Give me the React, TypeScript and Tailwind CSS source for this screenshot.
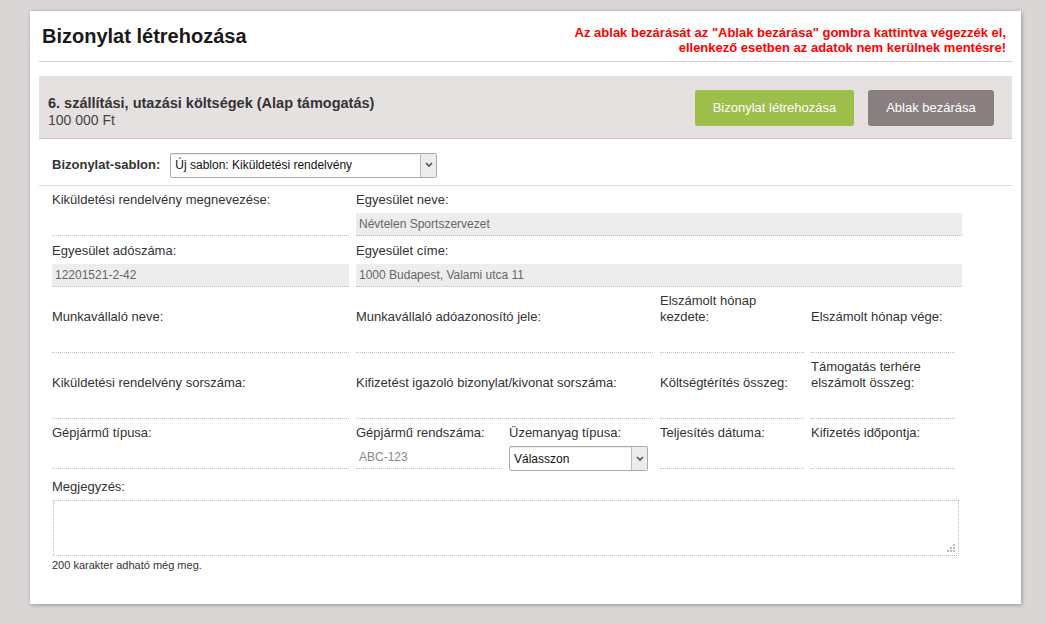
import React from "react";

const font = { fontFamily: '"Liberation Sans", Arial, sans-serif' };

function Chevron() {
  return (
    <svg width="8" height="6" viewBox="0 0 8 6">
      <polyline points="1,1 4,4 7,1" fill="none" stroke="#555" strokeWidth="1.6" />
    </svg>
  );
}

function FakeSelect({ text, className }: { text: string; className: string }) {
  return (
    <div
      className={`flex items-stretch border border-[#aaa] rounded-[2px] bg-white shadow-[inset_0_1px_1px_rgba(0,0,0,0.08)] ${className}`}
    >
      <div className="flex-1 flex items-center pl-[4px] text-[12px] text-[#111]">{text}</div>
      <div className="w-[16px] flex items-center justify-center bg-[#ececec] border-l border-[#bbb]">
        <Chevron />
      </div>
    </div>
  );
}

function Field({
  label,
  value,
  placeholder,
  gray,
  className = "",
}: {
  label: React.ReactNode;
  value?: string;
  placeholder?: string;
  gray?: boolean;
  className?: string;
}) {
  return (
    <div className={`flex flex-col justify-end ${className}`}>
      <div className="text-[13px] leading-[16px] text-[#333]">{label}</div>
      <div
        className={`mt-[5px] h-[23px] flex items-center pl-[3px] border-b border-dotted border-[#bdbdbd] text-[12px] ${
          gray ? "bg-[#ededed] text-[#666]" : "text-[#888]"
        }`}
      >
        {value ?? placeholder ?? ""}
      </div>
    </div>
  );
}

export default function App() {
  return (
    <div className="min-h-screen bg-[#dad6d6] pt-[11px] pl-[30px]" style={font}>
      <div className="w-[991px] h-[593px] bg-white shadow-[1px_1px_4px_rgba(0,0,0,0.3)] px-[9px]">
        {/* header */}
        <div className="h-[51px] flex items-end justify-between border-b border-[#cfcfcf] pb-[6px]">
          <h1 className="text-[20px] font-bold text-[#1a1a1a] pl-[3px] leading-[24px] mb-[7px]">
            Bizonylat létrehozása
          </h1>
          <div className="text-right text-[13px] font-bold text-[#f00] leading-[15px] pr-[6px]">
            <div>Az ablak bezárását az "Ablak bezárása" gombra kattintva végezzék el,</div>
            <div>ellenkező esetben az adatok nem kerülnek mentésre!</div>
          </div>
        </div>

        {/* band */}
        <div className="mt-[14px] h-[63px] bg-[#e5e1e0] border-b border-[#c9c5c5] flex items-center justify-between pl-[9px] pr-[18px]">
          <div className="text-[#333] pt-[10px]">
            <div className="text-[14.5px] font-bold leading-[17px]">
              6. szállítási, utazási költségek (Alap támogatás)
            </div>
            <div className="text-[14px] leading-[17px] text-[#444]">100 000 Ft</div>
          </div>
          <div className="flex gap-[14px] items-center pt-[1px]">
            <button className="h-[36px] w-[159px] rounded-[3px] bg-[#9dbe49] text-white text-[13px]">
              Bizonylat létrehozása
            </button>
            <button className="h-[36px] w-[126px] rounded-[3px] bg-[#8a7f80] text-white text-[13px]">
              Ablak bezárása
            </button>
          </div>
        </div>

        {/* template */}
        <div className="h-[47px] flex items-center gap-[10px] pl-[13px] pt-[6px] border-b border-[#dcdcdc]">
          <span className="text-[13px] font-bold text-[#333]">Bizonylat-sablon:</span>
          <FakeSelect text="Új sablon: Kiküldetési rendelvény" className="w-[267px] h-[25px]" />
        </div>

        {/* fields */}
        <div className="pl-[13px]">
          <div className="grid grid-cols-[297px_146px_144px_144px_144px] gap-x-[7px] h-[51px] pb-[1px]">
            <Field label="Kiküldetési rendelvény megnevezése:" />
            <Field label="Egyesület neve:" value="Névtelen Sportszervezet" gray className="col-span-4 w-[606px]" />
          </div>
          <div className="grid grid-cols-[297px_146px_144px_144px_144px] gap-x-[7px] h-[51px] pb-[1px]">
            <Field label="Egyesület adószáma:" value="12201521-2-42" gray />
            <Field label="Egyesület címe:" value="1000 Budapest, Valami utca 11" gray className="col-span-4 w-[606px]" />
          </div>
          <div className="grid grid-cols-[297px_297px_144px_144px] gap-x-[7px] h-[65px]">
            <Field label="Munkavállaló neve:" />
            <Field label="Munkavállaló adóazonosító jele:" />
            <Field label={<>Elszámolt hónap<br />kezdete:</>} />
            <Field label="Elszámolt hónap vége:" />
          </div>
          <div className="grid grid-cols-[297px_297px_144px_144px] gap-x-[7px] h-[66px]">
            <Field label="Kiküldetési rendelvény sorszáma:" />
            <Field label="Kifizetést igazoló bizonylat/kivonat sorszáma:" />
            <Field label="Költségtérítés összeg:" />
            <Field label={<>Támogatás terhére<br />elszámolt összeg:</>} />
          </div>
          <div className="grid grid-cols-[297px_146px_144px_144px_144px] gap-x-[7px] h-[51px] pb-[1px]">
            <Field label="Gépjármű típusa:" />
            <Field label="Gépjármű rendszáma:" placeholder="ABC-123" />
            <div className="flex flex-col justify-end">
              <div className="text-[13px] leading-[16px] text-[#333]">Üzemanyag típusa:</div>
              <FakeSelect text="Válasszon" className="mt-[5px] h-[25px] w-[139px] -mb-[2px]" />
            </div>
            <Field label="Teljesítés dátuma:" />
            <Field label="Kifizetés időpontja:" />
          </div>

          <div className="pt-[9px]">
            <div className="text-[13px] leading-[16px] text-[#333]">Megjegyzés:</div>
            <div className="relative mt-[5px] ml-[1px] w-[906px] h-[56px] border border-dotted border-[#bdbdbd]">
              <svg className="absolute right-[3px] bottom-[3px]" width="8" height="8" viewBox="0 0 8 8">
                <rect x="6" y="0" width="2" height="2" fill="#bbb" />
                <rect x="3" y="3" width="2" height="2" fill="#bbb" />
                <rect x="6" y="3" width="2" height="2" fill="#bbb" />
                <rect x="0" y="6" width="2" height="2" fill="#bbb" />
                <rect x="3" y="6" width="2" height="2" fill="#bbb" />
                <rect x="6" y="6" width="2" height="2" fill="#bbb" />
              </svg>
            </div>
            <div className="text-[11px] leading-[14px] text-[#333] mt-[2px]">200 karakter adható még meg.</div>
          </div>
        </div>
      </div>
    </div>
  );
}
